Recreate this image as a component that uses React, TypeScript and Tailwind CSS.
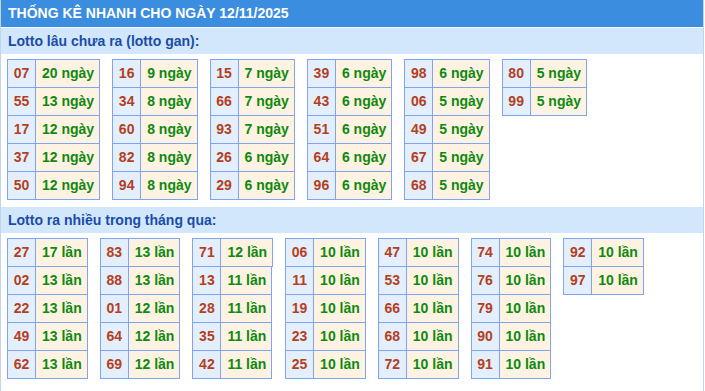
import React from "react";

type Pair = [string, string];

const gan: Pair[][] = [
  [["07", "20"], ["55", "13"], ["17", "12"], ["37", "12"], ["50", "12"]],
  [["16", "9"], ["34", "8"], ["60", "8"], ["82", "8"], ["94", "8"]],
  [["15", "7"], ["66", "7"], ["93", "7"], ["26", "6"], ["29", "6"]],
  [["39", "6"], ["43", "6"], ["51", "6"], ["64", "6"], ["96", "6"]],
  [["98", "6"], ["06", "5"], ["49", "5"], ["67", "5"], ["68", "5"]],
  [["80", "5"], ["99", "5"]],
];

const nhieu: Pair[][] = [
  [["27", "17"], ["02", "13"], ["22", "13"], ["49", "13"], ["62", "13"]],
  [["83", "13"], ["88", "13"], ["01", "12"], ["64", "12"], ["69", "12"]],
  [["71", "12"], ["13", "11"], ["28", "11"], ["35", "11"], ["42", "11"]],
  [["06", "10"], ["11", "10"], ["19", "10"], ["23", "10"], ["25", "10"]],
  [["47", "10"], ["53", "10"], ["66", "10"], ["68", "10"], ["72", "10"]],
  [["74", "10"], ["76", "10"], ["79", "10"], ["90", "10"], ["91", "10"]],
  [["92", "10"], ["97", "10"]],
];

function NumTable({ rows, unit }: { rows: Pair[]; unit: string }) {
  return (
    <div className="flex flex-col border-t border-l border-solid border-[#7fa4f0]">
      {rows.map(([n, c]) => (
        <div key={n} className="flex h-[28px]">
          <div className="w-[28px] flex items-center justify-center border-r border-b border-solid border-[#7fa4f0] bg-[#e3effd] text-[#b43f1d]">
            {n}
          </div>
          <div className="flex items-center pl-[6px] pr-[5px] border-r border-b border-solid border-[#7fa4f0] bg-[#fef3e2] text-[#0f890f] whitespace-nowrap">
            {c} {unit}
          </div>
        </div>
      ))}
    </div>
  );
}

function SectionHead({ children }: { children: React.ReactNode }) {
  return (
    <div className="h-[26px] bg-[#d3e7fc] text-[#1a4da8] flex items-center pl-[7px]">
      {children}
    </div>
  );
}

export default function App() {
  return (
    <div
      className="w-[704px] min-h-[391px] border-x border-solid border-[#c4d3e8] bg-white font-bold text-[14px]"
      style={{ fontFamily: '"Liberation Sans", Arial, sans-serif' }}
    >
      <div className="h-[27px] bg-[#3b8ddf] text-white flex items-center pl-[7px]">
        THỐNG KÊ NHANH CHO NGÀY 12/11/2025
      </div>
      <div className="h-px bg-white" />
      <SectionHead>Lotto lâu chưa ra (lotto gan):</SectionHead>
      <div className="flex items-start gap-x-[12px] pl-[6px] pt-[5px]">
        {gan.map((t, i) => (
          <NumTable key={i} rows={t} unit="ngày" />
        ))}
      </div>
      <div className="h-[7px]" />
      <SectionHead>Lotto ra nhiều trong tháng qua:</SectionHead>
      <div className="flex items-start gap-x-[12px] pl-[6px] pt-[5px]">
        {nhieu.map((t, i) => (
          <NumTable key={i} rows={t} unit="lần" />
        ))}
      </div>
    </div>
  );
}
